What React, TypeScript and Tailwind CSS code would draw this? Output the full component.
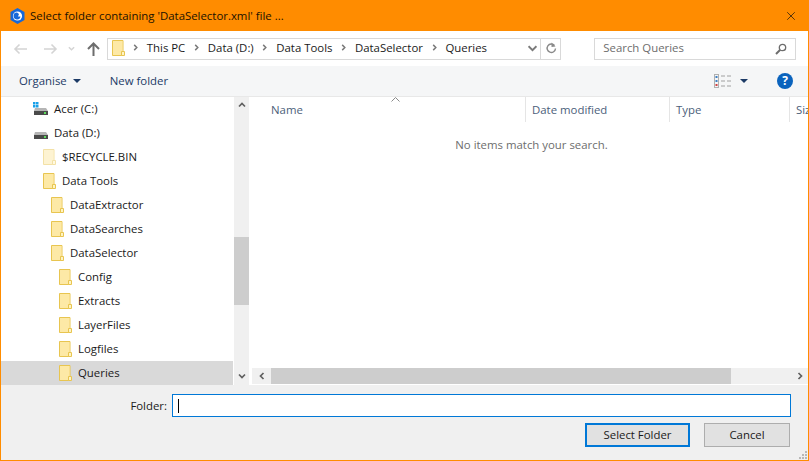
import React from 'react';
import { X } from 'lucide-react';

const font = "[font-family:'Open_Sans','Noto_Sans',sans-serif]";

const Folder = ({ faded = false }: { faded?: boolean }) => (
  <svg width="13" height="16" viewBox="0 0 13 16" className={`shrink-0 ${faded ? 'opacity-50' : ''}`}>
    <path d="M.5.5h10.500v15H.5z" fill="#fde28f" stroke="#e8c550" />
    <path d="M1 1h9.500v14H1z" fill="#fde9a6" />
    <path d="M9.500 11.500h3v4h-3z" fill="#fff4c4" stroke="#e8c550" />
  </svg>
);

const Drive = ({ win = false }: { win?: boolean }) => (
  <svg width="16" height="14" viewBox="0 0 16 14" className="shrink-0">
    {win && (
      <g fill="#18a0e8">
        <rect x="0" y="0" width="2.500" height="2.500" />
        <rect x="3" y="0" width="2.500" height="2.500" />
        <rect x="0" y="3" width="2.500" height="2.500" />
        <rect x="3" y="3" width="2.500" height="2.500" />
      </g>
    )}
    <path d="M2 6h11l2 3H1z" fill="#b5b5b5" />
    <rect x="1" y="9" width="14" height="4" fill="#4a4a4a" />
    <rect x="11" y="10" width="2" height="2" fill="#5ddc5d" />
  </svg>
);

const Chev = ({ d, color = '#808080', size = 8 }: { d: string; color?: string; size?: number }) => (
  <svg width={size} height={size} viewBox="0 0 8 8" className="shrink-0">
    <path d={d} fill="none" stroke={color} strokeWidth="1.700" />
  </svg>
);

const Crumb = ({ label }: { label: string }) => (
  <>
    <Chev d="M2.500 1l3 3-3 3" color="#7a7a7a" size={7} />
    <span>{label}</span>
  </>
);

const tree: { label: string; indent: string; kind: string }[] = [
  { label: 'Acer (C:)', indent: 'pl-[32px]', kind: 'win' },
  { label: 'Data (D:)', indent: 'pl-[32px]', kind: 'drive' },
  { label: '$RECYCLE.BIN', indent: 'pl-[42px]', kind: 'faded' },
  { label: 'Data Tools', indent: 'pl-[42px]', kind: 'folder' },
  { label: 'DataExtractor', indent: 'pl-[50px]', kind: 'folder' },
  { label: 'DataSearches', indent: 'pl-[50px]', kind: 'folder' },
  { label: 'DataSelector', indent: 'pl-[50px]', kind: 'folder' },
  { label: 'Config', indent: 'pl-[58px]', kind: 'folder' },
  { label: 'Extracts', indent: 'pl-[58px]', kind: 'folder' },
  { label: 'LayerFiles', indent: 'pl-[58px]', kind: 'folder' },
  { label: 'Logfiles', indent: 'pl-[58px]', kind: 'folder' },
  { label: 'Queries', indent: 'pl-[58px]', kind: 'selected' },
];

export default function App() {
  return (
    <div className={`w-[809px] h-[461px] flex flex-col overflow-hidden border-x border-b border-[#ff8c00] bg-white text-[11.4px] text-[#1a1a1a] ${font}`}>
      {/* title bar */}
      <div className="h-[31px] shrink-0 bg-[#ff8c00] flex items-center pl-[9px] pr-[10px] gap-[5px] text-[11.4px] text-[#1a1200]">
        <svg width="15" height="16" viewBox="0 0 15 16" className="shrink-0">
          <path d="M7.500 0l7 4v8l-7 4-7-4V4z" fill="#1668d8" />
          <circle cx="7.500" cy="8" r="4.600" fill="#fff" />
          <path d="M7 4.500a3.500 3.500 0 1 0 3.500 4L8 8.500l1-2.500z" fill="#1668d8" />
        </svg>
        <span className="flex-1">Select folder containing 'DataSelector.xml' file ...</span>
        <X size={14} strokeWidth={1.2} color="#111" />
      </div>

      {/* navigation row */}
      <div className="h-[35px] shrink-0 flex items-center pl-[12px] pr-[12px]">
        <svg width="15" height="12" viewBox="0 0 15 12" className="shrink-0">
          <path d="M14 6H2M6.500 1.500L2 6l4.500 4.500" fill="none" stroke="#d4d4d4" strokeWidth="1.600" />
        </svg>
        <svg width="15" height="12" viewBox="0 0 15 12" className="shrink-0 ml-[15px]">
          <path d="M1 6h12M8.500 1.500L13 6l-4.500 4.500" fill="none" stroke="#d4d4d4" strokeWidth="1.600" />
        </svg>
        <div className="ml-[10px]"><Chev d="M1 2.500l3 3 3-3" color="#d4d4d4" size={7} /></div>
        <svg width="13" height="14" viewBox="0 0 13 14" className="shrink-0 ml-[12px]">
          <path d="M6.500 14V2M1 7l5.500-5.500L12 7" fill="none" stroke="#6d6d6d" strokeWidth="2" />
        </svg>
        <div className="ml-[7px] w-[455px] h-[22px] border border-[#d9d9d9] flex items-center">
          <div className="flex-1 flex items-center gap-[7px] pl-[4px]">
            <Folder />
            <div className="flex items-center gap-[7.75px] pb-[1px]">
              <Crumb label="This PC" />
              <Crumb label="Data (D:)" />
              <Crumb label="Data Tools" />
              <Crumb label="DataSelector" />
              <Crumb label="Queries" />
            </div>
          </div>
          <div className="w-[16px] flex justify-center"><Chev d="M.5 2l3.500 3.500L7.500 2" color="#7a7a7a" size={9} /></div>
          <div className="w-[20px] h-full border-l border-[#d9d9d9] flex items-center justify-center">
            <svg width="12" height="13" viewBox="0 0 12 13">
              <path d="M9.500 3.500a4.200 4.200 0 1 0 1 3" fill="none" stroke="#8a8a8a" strokeWidth="1.400" />
              <path d="M6.500 0.500v4.500l4-.5z" fill="#8a8a8a" />
            </svg>
          </div>
        </div>
        <div className="ml-[33px] w-[202px] h-[22px] border border-[#d9d9d9] flex items-center pl-[8px] pr-[8px] justify-between text-[#6d6d6d]">
          <span className="pb-[1px]">Search Queries</span>
          <svg width="12" height="12" viewBox="0 0 12 12">
            <circle cx="7.500" cy="4.500" r="3.200" fill="none" stroke="#6d6d6d" strokeWidth="1.300" />
            <path d="M5 7L1 11" stroke="#6d6d6d" strokeWidth="2" />
          </svg>
        </div>
      </div>

      {/* toolbar */}
      <div className="h-[30px] shrink-0 bg-[#f5f6f7] flex items-center pl-[18px] pr-[15px] text-[#1c3a66]">
        <span>Organise</span>
        <svg width="8" height="4" viewBox="0 0 8 4" className="ml-[6px]"><path d="M0 0h8L4 4z" fill="#1c3a66" /></svg>
        <span className="ml-[29px]">New folder</span>
        <div className="flex-1" />
        <svg width="17" height="14" viewBox="0 0 17 14" className="shrink-0">
          <rect x=".5" y=".5" width="4" height="13" fill="none" stroke="#b0b0b0" />
          <rect x="1.500" y="2" width="2" height="2" fill="#3c7fc4" />
          <rect x="1.500" y="6" width="2" height="2" fill="#3c7fc4" />
          <rect x="1.500" y="10" width="2" height="2" fill="#d04040" />
          <path d="M7 2h4M13 2h4M7 7h4M13 7h4M7 12h4M13 12h4" stroke="#a0a0a0" />
        </svg>
        <svg width="8" height="4" viewBox="0 0 8 4" className="ml-[9px]"><path d="M0 0h8L4 4z" fill="#1c3a66" /></svg>
        <div className="ml-[29px] w-4 h-4 rounded-full bg-[#0a63bd] text-white text-[12px] font-bold flex items-center justify-center leading-none">?</div>
      </div>

      {/* content */}
      <div className="h-[289px] shrink-0 flex border-t border-[#e8e8e8]">
        <div className="w-[232px] shrink-0">
          {tree.map((t) => (
            <div key={t.label} className={`h-[24px] flex items-center ${t.indent} ${t.kind === 'selected' ? 'bg-[#d9d9d9]' : ''}`}>
              {t.kind === 'win' && <Drive win />}
              {t.kind === 'drive' && <Drive />}
              {t.kind === 'faded' && <Folder faded />}
              {(t.kind === 'folder' || t.kind === 'selected') && <Folder />}
              <span className={t.kind === 'win' || t.kind === 'drive' ? 'ml-[5px]' : 'ml-[6px]'}>{t.label}</span>
            </div>
          ))}
        </div>
        <div className="w-[15px] ml-[1px] shrink-0 bg-[#f0f0f0] flex flex-col">
          <div className="h-[16px] flex items-center justify-center"><Chev d="M1 5.500l3-3 3 3" color="#606060" /></div>
          <div className="h-[124px]" />
          <div className="h-[68px] bg-[#cdcdcd]" />
          <div className="flex-1" />
          <div className="h-[16px] flex items-center justify-center mb-[1px]"><Chev d="M1 2.500l3 3 3-3" color="#606060" /></div>
        </div>
        <div className="flex-1 ml-[3px] flex flex-col min-w-0 overflow-hidden">
          <div className="relative h-[25px] shrink-0 flex text-[#4c607a]">
            <svg width="9" height="5" viewBox="0 0 9 5" className="absolute left-[139px] top-0">
              <path d="M.5 4.500l4-4 4 4" fill="none" stroke="#8a8a8a" />
            </svg>
            <div className="w-[274px] shrink-0 pl-[19px] pt-[4px] border-r border-[#e5e5e5]">Name</div>
            <div className="w-[144px] shrink-0 pl-[6px] pt-[4px] border-r border-[#e5e5e5]">Date modified</div>
            <div className="w-[120px] shrink-0 pl-[6px] pt-[4px] border-r border-[#e5e5e5]">Type</div>
            <div className="pl-[6px] pt-[4px]">Size</div>
          </div>
          <div className="flex-1 flex justify-center pt-[14px] text-[#6d6d6d] pl-[3px]">No items match your search.</div>
          <div className="h-[16px] shrink-0 mb-[1px] bg-[#f0f0f0] flex items-center">
            <div className="w-[19px] flex justify-center"><Chev d="M5.500 1l-3 3 3 3" color="#606060" /></div>
            <div className="w-[460px] h-full bg-[#cdcdcd]" />
            <div className="flex-1" />
            <div className="w-[17px] flex justify-center"><Chev d="M2.500 1l3 3-3 3" color="#606060" /></div>
          </div>
        </div>
      </div>

      {/* footer */}
      <div className="flex-1 bg-[#f0f0f0] relative flex flex-col pr-[17px]">
        <div className="flex items-center justify-end mt-[9px]">
          <span className="mr-[5px]">Folder:</span>
          <div className="w-[619px] h-[23px] border border-[#0078d7] bg-white flex items-center pl-[5px]">
            <div className="w-px h-[14px] bg-black" />
          </div>
        </div>
        <div className="flex justify-end gap-[14px] mt-[6px] mr-[1px]">
          <div className="w-[105px] h-[24px] border-2 border-[#0078d7] bg-[#e1e1e1] flex items-center justify-center">Select Folder</div>
          <div className="w-[86px] h-[24px] border border-[#adadad] bg-[#e1e1e1] flex items-center justify-center">Cancel</div>
        </div>
        <svg width="10" height="10" viewBox="0 0 10 10" className="absolute right-0 bottom-0">
          <g fill="#b8b8b8">
            <rect x="7" y="1" width="2" height="2" />
            <rect x="4" y="4" width="2" height="2" />
            <rect x="7" y="4" width="2" height="2" />
            <rect x="1" y="7" width="2" height="2" />
            <rect x="4" y="7" width="2" height="2" />
            <rect x="7" y="7" width="2" height="2" />
          </g>
        </svg>
      </div>
    </div>
  );
}
